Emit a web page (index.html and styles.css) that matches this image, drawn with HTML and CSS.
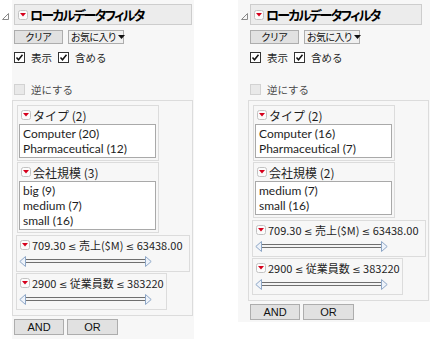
FILE: index.html
```html
<!DOCTYPE html>
<html lang="ja">
<head>
  <meta charset="UTF-8" />
  <title>ローカルデータフィルタ</title>
  <link rel="stylesheet" href="styles.css">
</head>
<body>
  <div class="page">

    <div class="panel panel-a">
      <div class="twisty">
        <svg width="7" height="7" viewBox="0 0 7 7"><polygon points="6.5,0.5 6.5,6.5 0.5,6.5" fill="none" stroke="#8a8a8a"/></svg>
      </div>
      <div class="filter">
        <div class="title">
          <svg class="menu" width="10" height="10" viewBox="0 0 10 10"><rect x="0.5" y="0.5" width="9" height="9" rx="2" fill="#fbfbfb" stroke="#c2c2c2"/><polygon points="2,3 8,3 5,6.5" fill="#d6001c"/></svg>
          <span>ローカルデータフィルタ</span>
        </div>
        <div class="actions">
          <button class="btn btn-clear">クリア</button>
          <button class="btn btn-fav">お気に入り <svg class="caret" width="7" height="4" viewBox="0 0 7 4"><polygon points="0,0 7,0 3.5,4" fill="#111"/></svg></button>
        </div>
        <div class="checks">
          <span class="box checked"><svg width="11" height="11" viewBox="0 0 11 11"><rect x="0.5" y="0.5" width="10" height="10" fill="#fff" stroke="#333"/><path d="M2.5 5.5 L4.5 7.8 L8.5 2.8" fill="none" stroke="#111" stroke-width="1.5"/></svg></span>
          <span class="label">表示</span>
          <span class="box checked"><svg width="11" height="11" viewBox="0 0 11 11"><rect x="0.5" y="0.5" width="10" height="10" fill="#fff" stroke="#333"/><path d="M2.5 5.5 L4.5 7.8 L8.5 2.8" fill="none" stroke="#111" stroke-width="1.5"/></svg></span>
          <span class="label">含める</span>
        </div>
        <div class="invert">
          <span class="box off"></span>
          <span class="label">逆にする</span>
        </div>

        <div class="group">
          <div class="section">
            <div class="head">
              <svg class="menu" width="10" height="10" viewBox="0 0 10 10"><rect x="0.5" y="0.5" width="9" height="9" rx="2" fill="#fbfbfb" stroke="#c2c2c2"/><polygon points="2,3 8,3 5,6.5" fill="#d6001c"/></svg>
              <span>タイプ (2)</span>
            </div>
            <ul class="list">
              <li>Computer (20)</li>
              <li>Pharmaceutical (12)</li>
            </ul>
          </div>
          <div class="section">
            <div class="head">
              <svg class="menu" width="10" height="10" viewBox="0 0 10 10"><rect x="0.5" y="0.5" width="9" height="9" rx="2" fill="#fbfbfb" stroke="#c2c2c2"/><polygon points="2,3 8,3 5,6.5" fill="#d6001c"/></svg>
              <span>会社規模 (3)</span>
            </div>
            <ul class="list">
              <li>big (9)</li>
              <li>medium (7)</li>
              <li>small (16)</li>
            </ul>
          </div>
          <div class="range range-wide">
            <div class="head">
              <svg class="menu" width="10" height="10" viewBox="0 0 10 10"><rect x="0.5" y="0.5" width="9" height="9" rx="2" fill="#fbfbfb" stroke="#c2c2c2"/><polygon points="2,3 8,3 5,6.5" fill="#d6001c"/></svg>
              <span>709.30 <span class="le">≤</span> <span class="kj">売上</span>($M) <span class="le">≤</span> 63438.00</span>
            </div>
            <svg class="slider" width="133" height="11" viewBox="0 0 133 11"><rect x="6.5" y="3.5" width="120" height="3" fill="#f4f4f4" stroke="#6f6f6f"/><polygon points="6.5,0.5 6.5,10.5 0.8,5.5" fill="#eef3fa" stroke="#8ea7c7"/><polygon points="126.5,0.5 126.5,10.5 132.2,5.5" fill="#eef3fa" stroke="#8ea7c7"/></svg>
          </div>
          <div class="range range-narrow">
            <div class="head">
              <svg class="menu" width="10" height="10" viewBox="0 0 10 10"><rect x="0.5" y="0.5" width="9" height="9" rx="2" fill="#fbfbfb" stroke="#c2c2c2"/><polygon points="2,3 8,3 5,6.5" fill="#d6001c"/></svg>
              <span>2900 <span class="le">≤</span> <span class="kj">従業員数</span> <span class="le">≤</span> 383220</span>
            </div>
            <svg class="slider" width="133" height="11" viewBox="0 0 133 11"><rect x="6.5" y="3.5" width="120" height="3" fill="#f4f4f4" stroke="#6f6f6f"/><polygon points="6.5,0.5 6.5,10.5 0.8,5.5" fill="#eef3fa" stroke="#8ea7c7"/><polygon points="126.5,0.5 126.5,10.5 132.2,5.5" fill="#eef3fa" stroke="#8ea7c7"/></svg>
          </div>
        </div>

        <div class="logic">
          <button class="btn btn-and">AND</button>
          <button class="btn btn-or">OR</button>
        </div>
      </div>
    </div>

    <div class="panel panel-b">
      <div class="twisty">
        <svg width="7" height="7" viewBox="0 0 7 7"><polygon points="6.5,0.5 6.5,6.5 0.5,6.5" fill="none" stroke="#8a8a8a"/></svg>
      </div>
      <div class="filter">
        <div class="title">
          <svg class="menu" width="10" height="10" viewBox="0 0 10 10"><rect x="0.5" y="0.5" width="9" height="9" rx="2" fill="#fbfbfb" stroke="#c2c2c2"/><polygon points="2,3 8,3 5,6.5" fill="#d6001c"/></svg>
          <span>ローカルデータフィルタ</span>
        </div>
        <div class="actions">
          <button class="btn btn-clear">クリア</button>
          <button class="btn btn-fav">お気に入り <svg class="caret" width="7" height="4" viewBox="0 0 7 4"><polygon points="0,0 7,0 3.5,4" fill="#111"/></svg></button>
        </div>
        <div class="checks">
          <span class="box checked"><svg width="11" height="11" viewBox="0 0 11 11"><rect x="0.5" y="0.5" width="10" height="10" fill="#fff" stroke="#333"/><path d="M2.5 5.5 L4.5 7.8 L8.5 2.8" fill="none" stroke="#111" stroke-width="1.5"/></svg></span>
          <span class="label">表示</span>
          <span class="box checked"><svg width="11" height="11" viewBox="0 0 11 11"><rect x="0.5" y="0.5" width="10" height="10" fill="#fff" stroke="#333"/><path d="M2.5 5.5 L4.5 7.8 L8.5 2.8" fill="none" stroke="#111" stroke-width="1.5"/></svg></span>
          <span class="label">含める</span>
        </div>
        <div class="invert">
          <span class="box off"></span>
          <span class="label">逆にする</span>
        </div>

        <div class="group">
          <div class="section">
            <div class="head">
              <svg class="menu" width="10" height="10" viewBox="0 0 10 10"><rect x="0.5" y="0.5" width="9" height="9" rx="2" fill="#fbfbfb" stroke="#c2c2c2"/><polygon points="2,3 8,3 5,6.5" fill="#d6001c"/></svg>
              <span>タイプ (2)</span>
            </div>
            <ul class="list">
              <li>Computer (16)</li>
              <li>Pharmaceutical (7)</li>
            </ul>
          </div>
          <div class="section">
            <div class="head">
              <svg class="menu" width="10" height="10" viewBox="0 0 10 10"><rect x="0.5" y="0.5" width="9" height="9" rx="2" fill="#fbfbfb" stroke="#c2c2c2"/><polygon points="2,3 8,3 5,6.5" fill="#d6001c"/></svg>
              <span>会社規模 (2)</span>
            </div>
            <ul class="list">
              <li>medium (7)</li>
              <li>small (16)</li>
            </ul>
          </div>
          <div class="range range-wide">
            <div class="head">
              <svg class="menu" width="10" height="10" viewBox="0 0 10 10"><rect x="0.5" y="0.5" width="9" height="9" rx="2" fill="#fbfbfb" stroke="#c2c2c2"/><polygon points="2,3 8,3 5,6.5" fill="#d6001c"/></svg>
              <span>709.30 <span class="le">≤</span> <span class="kj">売上</span>($M) <span class="le">≤</span> 63438.00</span>
            </div>
            <svg class="slider" width="133" height="11" viewBox="0 0 133 11"><rect x="6.5" y="3.5" width="120" height="3" fill="#f4f4f4" stroke="#6f6f6f"/><polygon points="6.5,0.5 6.5,10.5 0.8,5.5" fill="#eef3fa" stroke="#8ea7c7"/><polygon points="126.5,0.5 126.5,10.5 132.2,5.5" fill="#eef3fa" stroke="#8ea7c7"/></svg>
          </div>
          <div class="range range-narrow">
            <div class="head">
              <svg class="menu" width="10" height="10" viewBox="0 0 10 10"><rect x="0.5" y="0.5" width="9" height="9" rx="2" fill="#fbfbfb" stroke="#c2c2c2"/><polygon points="2,3 8,3 5,6.5" fill="#d6001c"/></svg>
              <span>2900 <span class="le">≤</span> <span class="kj">従業員数</span> <span class="le">≤</span> 383220</span>
            </div>
            <svg class="slider" width="133" height="11" viewBox="0 0 133 11"><rect x="6.5" y="3.5" width="120" height="3" fill="#f4f4f4" stroke="#6f6f6f"/><polygon points="6.5,0.5 6.5,10.5 0.8,5.5" fill="#eef3fa" stroke="#8ea7c7"/><polygon points="126.5,0.5 126.5,10.5 132.2,5.5" fill="#eef3fa" stroke="#8ea7c7"/></svg>
          </div>
        </div>

        <div class="logic">
          <button class="btn btn-and">AND</button>
          <button class="btn btn-or">OR</button>
        </div>
      </div>
    </div>

  </div>
</body>
</html>
```

FILE: styles.css
```css
body {
  margin: 0;
  background: #fff;
  font-family: "Noto Sans CJK JP", sans-serif;
  font-size: 12px;
  color: #1e1e1e;
}

.page {
  display: flex;
  align-items: flex-start;
}

.panel {
  display: flex;
  align-items: flex-start;
}

.panel-b {
  margin-left: 44px;
  background: #f7f7f7;
}

.twisty {
  width: 12px;
  box-sizing: border-box;
  padding: 13px 0 0 2px;
  line-height: 0;
}

.panel-b .twisty {
  width: 10px;
  padding-left: 3px;
}

.filter {
  width: 182px;
  box-sizing: border-box;
  background: #f7f7f7;
  padding: 4px 0 4px;
  display: flex;
  flex-direction: column;
}

.panel-b .filter {
  padding-bottom: 2px;
}

.title {
  margin-left: 2px;
  width: 178px;
  height: 21px;
  box-sizing: border-box;
  border: 1px solid #cdcdcd;
  background: #ececec;
  display: flex;
  align-items: center;
  gap: 2px;
  padding-left: 3px;
  font-size: 13px;
  font-weight: bold;
  letter-spacing: -1.8px;
  color: #000;
  font-feature-settings: "palt";
  white-space: nowrap;
}

.panel-b .title {
  width: 172px;
}

.menu {
  flex: none;
  display: block;
}

.actions {
  margin: 5px 0 0 2px;
  display: flex;
  gap: 5px;
}

.btn {
  height: 14px;
  box-sizing: border-box;
  border: 1px solid #adadad;
  background: #e1e1e1;
  padding: 0;
  font-family: "Noto Sans CJK JP", sans-serif;
  font-size: 10px;
  line-height: 12px;
  color: #111;
  white-space: nowrap;
  font-feature-settings: "palt";
}

.btn-clear {
  width: 49px;
}

.btn-fav {
  width: 56px;
  background: #f0f0f0;
  display: flex;
  align-items: center;
  padding-left: 2px;
  letter-spacing: -0.6px;
}

.caret {
  margin-left: 2px;
  flex: none;
}

.checks {
  margin: 7px 0 0 2px;
  height: 12px;
  display: flex;
  align-items: center;
}

.box {
  width: 11px;
  height: 11px;
  line-height: 0;
  flex: none;
}

.box.off {
  box-sizing: border-box;
  border: 1px solid #d2d2d2;
  background: #e9e9e9;
}

.checks .label {
  margin: 0 6px 0 6px;
  font-size: 10.5px;
}

.invert {
  margin: 21px 0 0 2px;
  height: 11px;
  display: flex;
  align-items: center;
}

.invert .label {
  margin-left: 6px;
  font-size: 10.5px;
  color: #4a4a4a;
}

.group {
  margin-top: 5px;
  width: 181px;
  box-sizing: border-box;
  border: 1px solid #dcdcdc;
  padding: 4px 0 5px 3px;
  display: flex;
  flex-direction: column;
  align-items: flex-start;
}

.section {
  margin: 0 0 1px 1px;
  width: 142px;
  box-sizing: border-box;
  border: 1px solid #dcdcdc;
  padding: 0 0 2px 1px;
}

.head {
  height: 18px;
  display: flex;
  align-items: center;
  gap: 2px;
  padding-left: 2px;
  white-space: nowrap;
}

.list {
  list-style: none;
  margin: 0;
  width: 137px;
  box-sizing: border-box;
  border: 1px solid #a9a9a9;
  background: #fff;
  padding: 1px 3px;
  font-family: Lato, "Noto Sans CJK JP", sans-serif;
  font-size: 12px;
}

.list li {
  line-height: 15px;
  height: 15px;
}

.range {
  margin-top: 1px;
  box-sizing: border-box;
  border: 1px solid #dcdcdc;
  padding: 0 0 4px 2px;
}

.range-wide {
  width: 174px;
}

.range-narrow {
  width: 151px;
}

.range .head {
  padding-left: 1px;
  font-size: 11px;
}

.le {
  font-family: "DejaVu Sans", sans-serif;
  font-size: 10px;
}

.kj {
  font-size: 11px;
}

.slider {
  display: block;
  margin-top: 2px;
}

.logic {
  margin: 3px 0 0 2px;
  display: flex;
  gap: 3px;
}

.logic .btn {
  height: 16px;
  font-family: "Liberation Sans", sans-serif;
  font-size: 11px;
}

.btn-and {
  width: 50px;
}

.btn-or {
  width: 51px;
}
```
